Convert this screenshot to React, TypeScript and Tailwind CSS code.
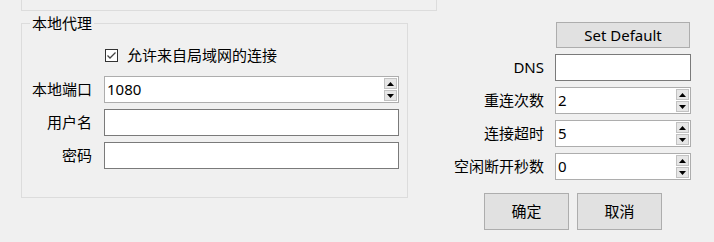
import React from "react";

const font = { fontFamily: '"Noto Sans", "Noto Sans CJK SC", sans-serif' };

function Arrow({ up }: { up?: boolean }) {
  return (
    <svg width="7" height="4" viewBox="0 0 7 4">
      {up ? <polygon points="0,4 7,4 3.5,0" fill="#000" /> : <polygon points="0,0 7,0 3.5,4" fill="#000" />}
    </svg>
  );
}

function Spin({ value, w }: { value: string; w: string }) {
  return (
    <div className={`flex h-[27px] ${w} border border-[#adadad] bg-white`}>
      <span className="flex-1 pl-[2px] leading-[25px]">{value}</span>
      <div className="flex flex-col gap-[1px] pt-[1px] pr-[1px]">
        <div className="flex h-[11px] w-[13px] items-center justify-center border border-[#c2c2c2] bg-[#e6e6e6]">
          <Arrow up />
        </div>
        <div className="flex h-[11px] w-[13px] items-center justify-center border border-[#c2c2c2] bg-[#e6e6e6]">
          <Arrow />
        </div>
      </div>
    </div>
  );
}

function TextBox({ w }: { w: string }) {
  return <div className={`h-[27px] ${w} border border-[#7a7a7a] bg-white`} />;
}

export default function App() {
  return (
    <div className="w-[714px] h-[242px] overflow-hidden bg-[#f0f0f0] text-[15px] text-black" style={font}>
      <div className="ml-[21px] h-[11px] w-[416px] border-x border-b border-[#dcdcdc]" />
      <div className="flex items-start">
        <fieldset className="ml-[21px] mt-[2px] h-[185px] w-[387px] border border-[#dcdcdc]">
          <legend className="ml-[8px] px-[2px] leading-[20px]">本地代理</legend>
          <div className="flex flex-col pt-[12px]">
            <div className="flex h-[20px] items-center pl-[83px]">
              <div className="flex h-[13px] w-[13px] items-center justify-center border border-[#333] bg-white">
                <svg width="11" height="9" viewBox="0 0 11 9">
                  <polyline points="1.5,4.5 4,7 9.5,1.5" fill="none" stroke="#444" strokeWidth="1.3" />
                </svg>
              </div>
              <span className="ml-[9px] leading-[20px]">允许来自局域网的连接</span>
            </div>
            <div className="mt-[11px] grid grid-cols-[70px_295px] gap-x-[12px] gap-y-[6px] items-center">
              <span className="text-right">本地端口</span>
              <Spin value="1080" w="w-[295px]" />
              <span className="text-right">用户名</span>
              <TextBox w="w-[295px]" />
              <span className="text-right">密码</span>
              <TextBox w="w-[295px]" />
            </div>
          </div>
        </fieldset>
        <div className="ml-[32px] mt-[11px] flex flex-col">
          <div className="grid grid-cols-[104px_136px] gap-x-[11px] gap-y-[6px] items-center">
            <span />
            <button className="ml-[1px] h-[26px] w-[134px] border border-[#adadad] bg-[#e1e1e1] leading-[24px]">
              Set Default
            </button>
            <span className="text-right">DNS</span>
            <TextBox w="w-[136px]" />
            <span className="text-right">重连次数</span>
            <Spin value="2" w="w-[136px]" />
            <span className="text-right">连接超时</span>
            <Spin value="5" w="w-[136px]" />
            <span className="text-right">空闲断开秒数</span>
            <Spin value="0" w="w-[136px]" />
          </div>
          <div className="ml-[44px] mt-[13px] flex gap-[8px]">
            <button className="h-[37px] w-[85px] border border-[#adadad] bg-[#e1e1e1]">确定</button>
            <button className="h-[37px] w-[85px] border border-[#adadad] bg-[#e1e1e1]">取消</button>
          </div>
        </div>
      </div>
    </div>
  );
}
